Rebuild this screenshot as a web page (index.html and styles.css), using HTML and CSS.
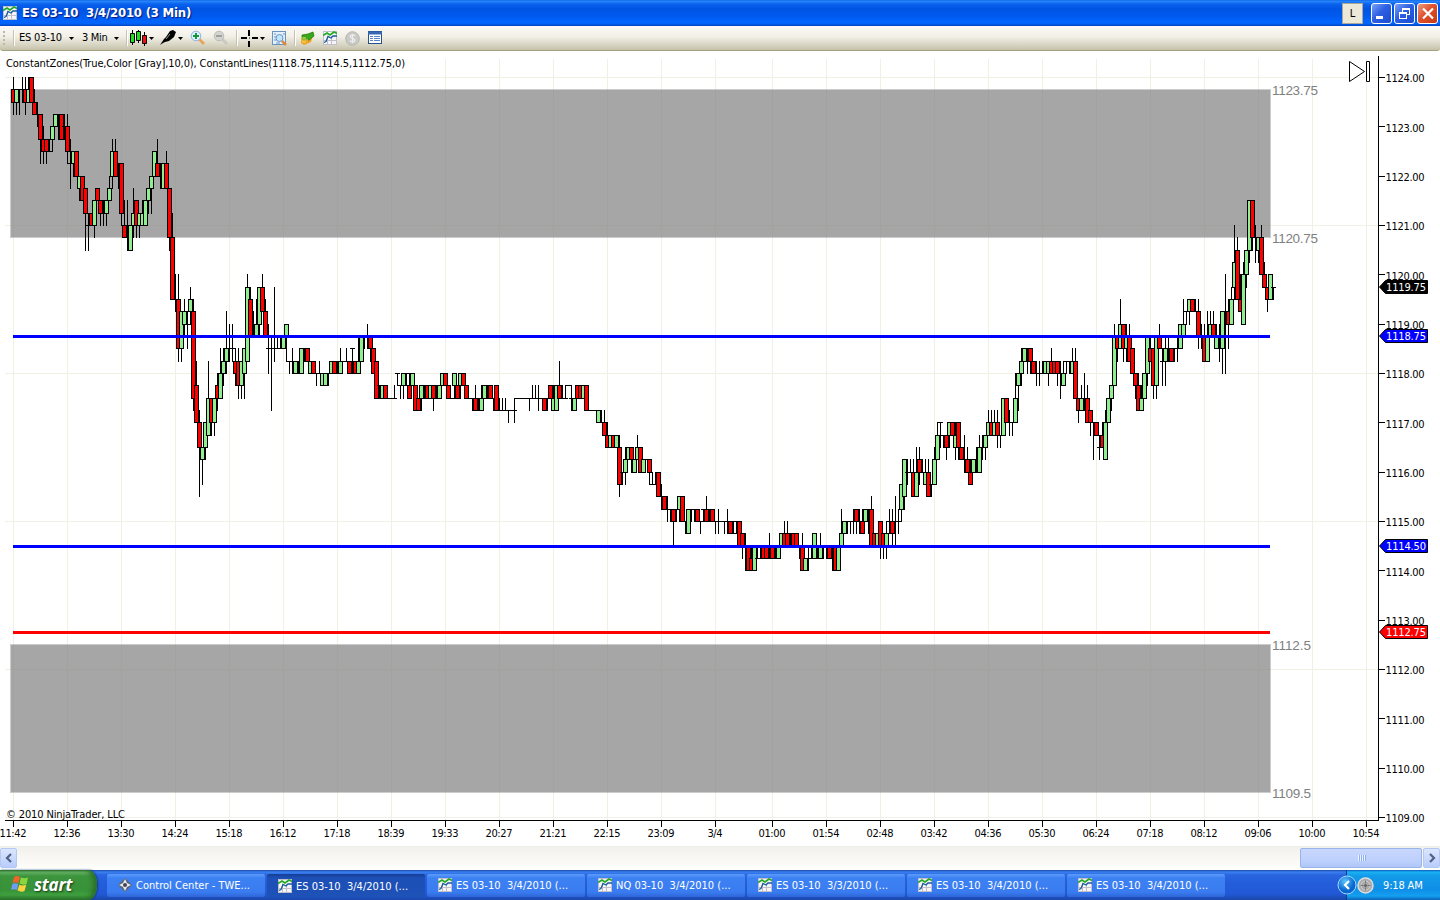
FILE: index.html
```html
<!DOCTYPE html>
<html lang="en">
<head>
    <meta charset="UTF-8">
    <title>ES 03-10  3/4/2010 (3 Min)</title>
    <link rel="stylesheet" href="styles.css">
</head>
<body>

    <!-- shared icons -->
    <svg class="defs" width="0" height="0">
        <symbol id="i-chart" viewBox="0 0 14 14">
            <rect width="14" height="14" fill="#f6f6fa"/>
            <path d="M.5 0v14M4.500 5v9M8.500 5v9M13.500 0v14M0 .5h14M0 9.500h14M0 13.500h14" stroke="#c0c0cc" fill="none"/>
            <path d="M0 4.500l4-2.500 3 2 4-3 3 1.500" stroke="#22a822" stroke-width="1.600" fill="none"/>
            <path d="M1 11.500l2-1 2-5 3 1.500 2-2 4 0" stroke="#1c5a9c" stroke-width="1.300" fill="none"/>
        </symbol>
        <symbol id="i-drop" viewBox="0 0 5 3"><path d="M0 0h5L2.500 3z" fill="#000"/></symbol>
    </svg>

    <div class="titlebar">
        <svg class="app-icon"><use href="#i-chart"/></svg>
        <span class="title">ES 03-10&nbsp; 3/4/2010 (3 Min)</span>
        <span class="link-btn">L</span>
        <div class="win-btns">
            <span class="win-btn"><svg width="19" height="19"><path d="M4 13.500h7" stroke="#fff" stroke-width="3"/></svg></span>
            <span class="win-btn"><svg width="19" height="19"><path d="M7.500 4v4M7 4.500h8M7 5.500h8M14.500 4v6M12 10.500h3M4.500 8v7M4 8.500h8M4 9.500h8M11.500 8v7M4 14.500h8" stroke="#fff" fill="none"/></svg></span>
            <span class="win-btn close"><svg width="19" height="19"><path d="M5 4.500l10 10M15 4.500l-10 10" stroke="#fff" stroke-width="2.200"/></svg></span>
        </div>
    </div>

    <div class="toolbar">
        <span class="grip"></span>
        <span class="sep"></span>
        <span class="tool-text instrument">ES 03-10</span>
        <svg class="drop"><use href="#i-drop"/></svg>
        <span class="tool-text period">3 Min</span>
        <svg class="drop"><use href="#i-drop"/></svg>
        <span class="sep second"></span>
        <svg class="tool candles" width="17" height="16"><path d="M2.500 0v15M8.500 0v13M14.500 2v14" stroke="#000"/><path d="M.5 3.500h4v9h-4zM6.500 1.500h4v9h-4z" fill="#1fe01f" stroke="#000"/><path d="M12.500 5.500h4v8h-4z" fill="#f01010" stroke="#000"/></svg>
        <svg class="drop near"><use href="#i-drop"/></svg>
        <svg class="tool pen" width="16" height="16"><path d="M0 15l4-6 2-2 4-6 3-1 3 2-2 5-5 4-4 1-2 1z" fill="#000"/><path d="M6 9l4-5" stroke="#999"/></svg>
        <svg class="drop near"><use href="#i-drop"/></svg>
        <svg class="tool zoom-in" width="16" height="16"><path d="M9 9l5 5" stroke="#e8a45a" stroke-width="3"/><circle cx="6" cy="6" r="4.800" fill="#dff0ff" stroke="#8fb4dc"/><path d="M6 3v6M3 6h6" stroke="#16963a" stroke-width="2"/></svg>
        <svg class="tool zoom-out" width="16" height="16"><path d="M9 9l5 5" stroke="#c8c8c4" stroke-width="3"/><circle cx="6" cy="6" r="4.800" fill="#d4d4d0" stroke="#bcbcb8"/><path d="M3 6h6" stroke="#a0a09c" stroke-width="2"/></svg>
        <span class="sep third"></span>
        <svg class="tool cross" width="17" height="17"><path d="M0 8h6M11 8h6M8 0v6M8 11v6" stroke="#000" stroke-width="2"/><path d="M8 8h1" stroke="#000"/></svg>
        <svg class="drop near"><use href="#i-drop"/></svg>
        <svg class="tool page" width="15" height="15"><rect x=".5" y=".5" width="13" height="13" fill="#e4f0fc" stroke="#6a93c4"/><path d="M2 3h2M2 6h2M2 9h2M11 3h2M4 12h4" stroke="#6a93c4"/><path d="M10 10l4 4" stroke="#e08a40" stroke-width="2.500"/><circle cx="7.500" cy="7" r="3.500" fill="#c4e4fa" stroke="#6a93c4"/></svg>
        <span class="sep fourth"></span>
        <svg class="tool order" width="15" height="15"><path d="M1 7l3-3h9l-2 7-7 3-3-2z" fill="#f0a020"/><path d="M2 4l6-1 5-2 1 4-5 4-7 0z" fill="#38a818" stroke="#187008" stroke-width=".7"/><path d="M1 7h5M1 9h7M2 11h4" stroke="#ffe060"/></svg>
        <svg class="tool mini-chart"><use href="#i-chart"/></svg>
        <svg class="tool dollar" width="15" height="15"><circle cx="7.500" cy="7.500" r="6.800" fill="#c9c9c5" stroke="#b6b6b2"/><path d="M10 5c-1-1.500-5-1.500-5 .6s5 1.300 5 3.500-4 2-5 .6M7.500 3v9" stroke="#eee" stroke-width="1.200" fill="none"/></svg>
        <svg class="tool table" width="15" height="14"><rect x=".5" y=".5" width="13" height="12" fill="#fff" stroke="#27508c"/><path d="M0 2h14" stroke="#3668b4" stroke-width="3"/><path d="M2 5.500h3M2 7.500h3M2 9.500h3M6 5.500h6M6 7.500h6M6 9.500h6" stroke="#5a86c8"/></svg>
    </div>

    <svg id="chart" class="chart" width="1440" height="795" viewBox="0 51 1440 795"></svg>

    <div class="scrollbar">
        <span class="scroll-btn"><svg width="8" height="10"><path d="M6 1L2 5l4 4" stroke="#4d6185" stroke-width="2.200" fill="none"/></svg></span>
        <span class="scroll-thumb"><i></i><i></i><i></i><i></i></span>
        <span class="scroll-btn"><svg width="8" height="10"><path d="M2 1l4 4-4 4" stroke="#4d6185" stroke-width="2.200" fill="none"/></svg></span>
    </div>

    <div class="taskbar">
        <div class="start">
            <svg width="18" height="18" viewBox="0 0 18 18">
                <path d="M3 2q3-2 6 0L7.500 8q-3-1.500-6 0z" fill="#f2632c"/>
                <path d="M10 2.500q3 1.500 7 0L15.500 9q-3 1.500-7-.5z" fill="#8bd63c"/>
                <path d="M1.300 9q3-1.500 6 0L6 15q-3-1.500-6 0z" fill="#6f9cf4"/>
                <path d="M8.300 9.800q3 1.500 7 0L13.500 16q-3 1.500-7-.5z" fill="#fbd33c"/>
            </svg>
            <span>start</span>
        </div>
        <div class="tasks">
            <div class="task"><svg viewBox="0 0 14 14"><path d="M7 0l7 7-7 7-7-7z" fill="#596577"/><path d="M7 1l2 4 4 2-4 2-2 4-2-4-4-2 4-2z" fill="#e4e8ee"/><circle cx="7" cy="7" r="2" fill="#445"/></svg><span>Control Center - TWE...</span></div>
            <div class="task active"><svg><use href="#i-chart"/></svg><span>ES 03-10&nbsp; 3/4/2010 (...</span></div>
            <div class="task"><svg><use href="#i-chart"/></svg><span>ES 03-10&nbsp; 3/4/2010 (...</span></div>
            <div class="task"><svg><use href="#i-chart"/></svg><span>NQ 03-10&nbsp; 3/4/2010 (...</span></div>
            <div class="task"><svg><use href="#i-chart"/></svg><span>ES 03-10&nbsp; 3/3/2010 (...</span></div>
            <div class="task"><svg><use href="#i-chart"/></svg><span>ES 03-10&nbsp; 3/4/2010 (...</span></div>
            <div class="task"><svg><use href="#i-chart"/></svg><span>ES 03-10&nbsp; 3/4/2010 (...</span></div>
        </div>
        <div class="tray">
            <svg class="expand" width="20" height="20"><defs><radialGradient id="ball" cx=".4" cy=".3"><stop offset="0" stop-color="#5cc8ff"/><stop offset="1" stop-color="#0a66d0"/></radialGradient></defs><circle cx="10" cy="10" r="9" fill="url(#ball)" stroke="#9fdcff"/><path d="M12 6l-4 4 4 4" stroke="#fff" stroke-width="2.200" fill="none"/></svg>
            <svg class="disc" width="17" height="17"><circle cx="8.500" cy="8.500" r="7.500" fill="#a9a9a9" stroke="#dcdcdc" stroke-width="1.500"/><circle cx="8.500" cy="8.500" r="4.500" fill="none" stroke="#d2d2d2"/><path d="M8.500 3.500v3M8.500 10.500v3M3.500 8.500h3M10.500 8.500h3" stroke="#777"/><circle cx="8.500" cy="8.500" r="1.500" fill="#666"/></svg>
            <span>9:18 AM</span>
        </div>
    </div>

    <script src="chart.js"></script>
</body>
</html>
```

FILE: styles.css
```css
body {
    margin: 0;
    width: 1440px;
    height: 900px;
    overflow: hidden;
    display: flex;
    flex-direction: column;
    background: #fff;
    font-family: "DejaVu Sans Condensed", "DejaVu Sans", sans-serif;
    font-stretch: condensed;
    font-size: 11px;
    color: #000;
}
.defs {
    position: absolute;
}
svg {
    display: block;
    flex: none;
}

/* title bar */
.titlebar {
    box-sizing: border-box;
    height: 26px;
    flex: none;
    display: flex;
    align-items: center;
    padding: 0 2px 0 3px;
    background: linear-gradient(#0a5ae0 0, #2a8afc 1px, #0a62ee 4px, #0054e3 9px, #005bf0 17px, #0066ff 22px, #0060f4 24px, #0040b8 26px);
}
.app-icon {
    width: 14px;
    height: 14px;
}
.title {
    margin-left: 5px;
    color: #fff;
    font-size: 13px;
    font-weight: bold;
    letter-spacing: -0.2px;
    line-height: 26px;
    text-shadow: 1px 1px 1px #0a1883;
    white-space: pre;
}
.link-btn {
    box-sizing: border-box;
    width: 21px;
    height: 21px;
    margin-left: auto;
    background: #ece9d8;
    border: 1px solid #aca899;
    line-height: 20px;
    text-align: center;
}
.win-btns {
    display: flex;
    gap: 2px;
    margin-left: 8px;
}
.win-btn {
    width: 19px;
    height: 19px;
    border: 1px solid #fff;
    border-radius: 3px;
    background: linear-gradient(135deg, #7aa2f6, #2c5fe2 45%, #1b4cd0);
}
.win-btn.close {
    background: linear-gradient(135deg, #ee9a80, #e0512c 45%, #c23a12);
}

/* toolbar */
.toolbar {
    box-sizing: border-box;
    height: 25px;
    flex: none;
    display: flex;
    align-items: center;
    padding-left: 3px;
    background: linear-gradient(#fbfaf7, #f1efe6 45%, #d2cfbc 85%, #c3c1a8);
    border-bottom: 1px solid #a0a280;
    border-radius: 0 0 3px 3px;
}
.grip {
    width: 2px;
    height: 15px;
    background: repeating-linear-gradient(#bdb9a8 0 2px, transparent 2px 4px);
}
.sep {
    width: 1px;
    height: 16px;
    margin-left: 8px;
    background: #c5c2b2;
    border-right: 1px solid #fff;
}
.sep.second { margin-left: 7px; }
.sep.third { margin-left: 7px; }
.sep.fourth { margin-left: 7px; }
.tool-text {
    white-space: nowrap;
    line-height: 24px;
}
.instrument {
    width: 46px;
    margin-left: 4px;
    letter-spacing: -0.2px;
}
.period {
    width: 28px;
    margin-left: 8px;
    letter-spacing: -0.3px;
}
.drop {
    width: 5px;
    height: 3px;
    margin-left: 4px;
}
.drop.near {
    margin-left: 2px;
}
.candles { margin-left: 2px; }
.pen { margin-left: 6px; }
.zoom-in { margin-left: 7px; }
.zoom-out { margin-left: 7px; }
.cross { margin-left: 3px; }
.page { margin-left: 7px; }
.order { margin-left: 4px; }
.mini-chart {
    width: 14px;
    height: 14px;
    margin-left: 8px;
}
.dollar { margin-left: 8px; }
.table { margin-left: 8px; }

/* chart */
.chart text {
    font-size: 11px;
}
.chart .zone-label {
    font-family: "Liberation Sans", Arial, sans-serif;
    font-size: 13.5px;
    fill: #808080;
}
.chart .tag {
    fill: #fff;
}

/* scrollbar */
.scrollbar {
    box-sizing: border-box;
    height: 24px;
    flex: none;
    display: flex;
    align-items: center;
    gap: 1px;
    padding: 1px 0 3px;
    border-top: 1px solid #eeede5;
    background: linear-gradient(#f3f1ec, #fefefb);
}
.scroll-btn {
    box-sizing: border-box;
    width: 17px;
    height: 20px;
    display: flex;
    align-items: center;
    justify-content: center;
    border: 1px solid #b4c8f6;
    border-radius: 2px;
    background: linear-gradient(#dbe5fe, #b9cdfb);
}
.scroll-thumb {
    box-sizing: border-box;
    width: 122px;
    height: 20px;
    margin-left: auto;
    display: flex;
    align-items: center;
    justify-content: center;
    gap: 1px;
    border: 1px solid #98b4ea;
    border-radius: 2px;
    background: linear-gradient(#c9d7fd, #bccffc 70%, #b0c6f8);
}
.scroll-thumb i {
    width: 1px;
    height: 6px;
    background: #eef4fe;
    border-right: 1px solid #8cb0f8;
    margin-right: -1px;
}

/* taskbar */
.taskbar {
    height: 30px;
    flex: none;
    display: flex;
    background: linear-gradient(#1c48a8 0, #3a80f0 2px, #2a65df 5px, #245edb 12px, #2258d6 24px, #1b47a8 30px);
}
.start {
    box-sizing: border-box;
    width: 97px;
    height: 30px;
    display: flex;
    align-items: center;
    padding: 0 0 2px 11px;
    gap: 5px;
    border-radius: 0 9px 9px 0 / 0 14px 14px 0;
    background: linear-gradient(#2c6c2c 0, #6cb86c 2px, #3c953c 6px, #389238 20px, #3fa03f 25px, #2a702a 30px);
    box-shadow: inset -4px 0 5px #2a702a, 1px 0 2px #14388c;
    color: #fff;
    font-family: "Open Sans", sans-serif;
    font-stretch: normal;
    font-size: 17px;
    font-weight: bold;
    font-style: italic;
    letter-spacing: -0.2px;
    text-shadow: 1px 1px 2px #143c14;
}
.tasks {
    display: flex;
    gap: 2px;
    padding: 4px 0 0 10px;
}
.task {
    box-sizing: border-box;
    width: 158px;
    height: 23px;
    display: flex;
    align-items: center;
    gap: 4px;
    padding: 0 0 1px 11px;
    border-radius: 2px;
    background: linear-gradient(#5c9cfa 0, #3c81f3 4px, #3a7cf0 18px, #2d66d8);
    color: #fff;
    white-space: pre;
    letter-spacing: 0.02px;
}
.task svg {
    width: 14px;
    height: 14px;
}
.task.active {
    background: linear-gradient(#163f94, #1d4fb6 4px, #1e52b7);
    padding-top: 1px;
    padding-bottom: 0;
}
.tray {
    width: 93px;
    margin-left: auto;
    display: flex;
    align-items: center;
    background: linear-gradient(#0c59b9 0, #1bb0f4 2px, #129ae8 6px, #0f8fe8 20px, #14a0f0 26px, #0b63b8 30px);
    border-left: 1px solid #0a3c86;
    color: #fff;
}
.tray .expand {
    margin-left: -10px;
}
.tray .disc {
    margin-left: 0;
}
.tray span {
    margin-left: 9px;
    letter-spacing: -0.15px;
    white-space: nowrap;
}
```

FILE: chart.js
```js
// bars are stored in ticks (0.25) below 1124.00
// r/g = down/up bar: top.bottom[.high.low], d = doji: level[.high.low]
const bars = `
r1.2.0.3 g1.2.1.3 d1.1.3 d1.0.2 r1.2.0.3 g1.2.0.2 r0.2 r2.3.1.3 d3.2.4 r3.5.3.7
r5.6.4.7 r5.6.5.7 d6.5.6 g4.5.4.6 g3.4 d3.3.5 r3.5 d4.3.5 r4.6.3.7 d7.5.9
g6.7.6.8 r6.8 g8.9.8.10 r8.10 r9.11.9.14 d12.11.14 r11.12 g10.12.10.13 r9.10 r10.11.10.12
d11.10.12 g10.11.10.12 g9.10.8.10 g6.8.5.9 r6.8.5.8 d8.7.9 r7.11.7.12 r12.13.10.13 d12.10.14 g12.14
g11.12.9.13 r10.12.10.13 g11.12.11.13 g11.12.10.12 g10.12 g9.10.9.11 g8.9.8.11 g6.8 r7.8.5.8 d7.7.9
g7.9 r7.9.6.9 r9.13.9.14 r13.18.11.18 d18.16.19 r18.22.16.23 g19.22.19.23 g19.20.18.21 d20.19.22 g18.19.17.20
r19.26.18.27 r25.28.23.28 r28.30.27.34 g30.31.30.33 g28.30.28.31 g26.29.23.29 r26.28.26.29 g26.28.26.29 r25.26.24.27 g24.26.22.26
g23.24.22.25 g22.23.19.24 d22.20.23 d22.20.23 r23.24.22.25 r23.25.22.26 g23.25.23.26 g22.24.22.26 g17.23.16.23 r18.21.17.21
d21.19.21 g20.21.18.21 g17.20.17.21 r17.19.16.19 r19.21.18.21 d22.20.24 d22.21.27 d22.17.23 d22.21.22 d22.21.22
g21.22 g20.21.20.23 d23.23.24 d23.22.24 g23.24 d24.23.24 g22.24 d22.22.23 r22.23 g23.24
r23.24 d24.24.25 d24.23.24 g24.25 g24.25 d24.24.25 g23.24 r23.24 d24.23.24 g23.24.22.24
d23 d23.22.23 r23.24 d22.22.24 r23.24 g23.24.21.24 g21.23 d21.21.22 d21.20.22 r21.22.21.23
r22.24 r23.26 d25.25.26 g25.26 r25.26 d26 d26 d26.25.26 d24.24.25 d25.25.26
g24.25.24.26 d24.24.25 r25.26.24.26 g24.25 r25.27 r26.27 g25.26.25.27 d26.25.26 r25.26 g25.26
r25.26.25.27 d26.25.26 g25.26 g24.25 r24.25 r25.26 d26 g24.25.24.26 r25.26 g24.25.24.26
r24.25 r25.26 d26 d26.26.27 r26.27.25.27 d26.26.27 g26.27.25.27 g25.26 d25.25.26 r25.26
d26.26.27 r25.27 d27.26.27 d27.26.27 d27.26.27 d27.27.28 d27 d27.26.28 d26 d26
d26 d26 d26.26.27 d26.25.26 d26.25.26 d26.25.27 d26 r26.27 d26.26.27 r25.26
g26.27.25.27 g25.27 r25.26.23.26 d26.25.26 d26.25.26 d25 d26.25.27 g26.27 r25.26 r25.26
g25.26 r25.27 d27 d27 d27 g27.28 d28.27.28 r28.29.27.29 r29.30.28.30 g29.30
r29.30 g29.30 r30.33.29.34 d32.32.33 g31.32.30.33 g30.31 r30.31.30.32 g31.32 g30.31.29.31 r30.32
g31.32 d31 r31.32.31.33 d33.32.33 d33.32.33 r32.34 d34.33.35 r34.35 d35.34.36 d35.35.36
r35.36.35.38 d35.35.36 g34.35.34.36 r34.36 d36.36.37 g35.37 d35.35.36 d35.35.36 r35.36 d36.36.37
d35.35.36 r35.36.34.36 d35.35.36 r35.36 d36.36.37 d36.35.37 d36 d36.36.37 d36.35.37 r36.37
d36.36.37 d37.36.37 r36.38 r37.38.37.39 d38.37.40 r38.40 r39.40.38.40 g38.40 d39.38.39 d39.38.39
r38.39 r38.39 d39.37.39 r38.39 d39.38.39 g38.39 g37.38 r37.38.36.38 r37.38.36.38 d37.37.38
r37.38 r37.38 d38.38.39 r38.40.37.40 g39.40 d39.38.40 d39.38.39 g37.39 d38.38.39 g38.39.37.39
d38.38.39 d38.38.39 r38.39 d39.38.40 r38.40 g38.40 g37.38.35.38 g36.37 d36.36.37 d36.36.37
d36.35.37 r35.36.35.37 d36.35.37 r36.37.35.37 g35.36 d35.35.37 r35.38.34.38 r37.38 g37.38 r36.38.36.39
r37.38.37.39 g37.38.36.39 d36.35.37 r36.37.35.38 d36.34.38 d36.35.37 g33.35.33.36 g31.34.31.35 d32.31.33 d32.31.32
r32.34.31.34 g32.34.30.34 r31.32.30.33 d32.31.32 g32.33.31.33 r32.34.31.34 d33.33.34 g31.33.30.33 g29.31.28.31 d28.28.30
d29.29.30 r29.30.29.31 g28.29.28.30 r28.29 g29.30.28.31 r28.30.28.31 r30.31 d31.29.32 r31.32.30.32 r32.33.31.33
g31.32 d32.30.32 g30.32.29.32 d30.29.31 g29.30.29.31 g28.29.27.29 r28.29.27.29 g28.29.27.29 r28.29.27.30 d29.29.30
g26.29 r26.28 d28.27.29 d28.28.29 g26.28.24.28 g24.25.24.27 g23.24.22.25 g22.23 d22.22.24 r22.23.22.24
r23.24 d24.23.25 d24.23.25 d24.23.24 g23.24 g23.24.23.25 r23.24.22.24 r23.24 r23.24.23.25 d24.23.26
g24.25.23.25 d23.23.24 d23.23.24 g23.24.22.24 r23.26.22.26 r26.27.26.28 g26.27.25.27 d26.24.27 r26.28.25.28 r27.28.27.29
d28.28.31 r28.29 d30.29.31 r29.30.28.30 g28.31.27.31 g26.28 g25.26.25.27 g21.25.20.25 r21.22.21.23 g20.22.18.22
r20.22.20.23 g21.22.20.23 r21.23.20.23 r22.24 r24.25.24.26 r25.27.24.27 g26.27.25.27 g24.26 g21.24.21.25 r22.23.21.23
r22.25.22.26 g21.25.21.26 r21.22.20.22 d23.22.25 g22.23.21.25 d22.21.23 r22.23 d22.22.23 d22.21.23 g20.22
g20.21.18.21 d19.19.20 g18.19.18.20 r18.19 d19.18.19 r19.21.18.22 d21.20.22 r21.23.20.23 g21.23.19.23 g20.21.19.21
r20.21.19.21 g21.22.20.22 d21.20.23 g19.22.19.24 d19.16.24 r19.20.18.22 g18.20.17.20 g15.17.12.18 r14.18.13.18 r18.19.16.19
g16.20.15.20 g14.16.14.17 g10.14.10.15 r10.13.10.14 d13.12.15 g13.14.13.15 r13.16.12.16 r16.17.15.17 r17.18.17.19 g16.18
d17.17.18`.trim().split(/\s+/);

const times = ["11:42", "12:36", "13:30", "14:24", "15:18", "16:12", "17:18", "18:39", "19:33", "20:27", "21:21", "22:15", "23:09", "3/4",
    "01:00", "01:54", "02:48", "03:42", "04:36", "05:30", "06:24", "07:18", "08:12", "09:06", "10:00", "10:54"];

const tickY = n => Math.round(77 + n * 37 / 3);
const priceY = p => tickY((1124 - p) * 4);
const timeX = i => 13 + i * 54 + (i > 13 ? 3 : 0);

const rect = (x, y, w, h, fill, extra = "") => `<rect x="${x}" y="${y}" width="${w}" height="${h}" fill="${fill}" ${extra}/>`;
const text = (x, y, str, width, extra = "") => `<text x="${x}" y="${y}" textLength="${width}" ${extra}>${str}</text>`;

let out = "";

// grid
times.forEach((t, i) => out += rect(timeX(i), 59, 1, 761, "#f0f0e4"));
for (let p = 1124; p >= 1109; p -= 3) out += rect(5, priceY(p), 1373, 1, "#f0f0e4");

// zones
[[1123.75, 1120.75], [1112.5, 1109.5]].forEach(([hi, lo]) => {
    const y = priceY(hi), h = priceY(lo) - y;
    out += rect(11, y + 1, 1259, h - 1, "#808080", 'fill-opacity="0.7"');
    out += rect(10.5, y + .5, 1260, h, "none", 'stroke="#808080" stroke-opacity="0.4"');
    out += text(1272, y + 6, hi, hi === 1112.5 ? 39 : 46, 'class="zone-label"');
    out += text(1272, y + h + 6, lo, lo === 1109.5 ? 39 : 46, 'class="zone-label"');
});

// bars
bars.forEach((bar, i) => {
    const x = 13 + i * 3;
    const v = bar.slice(1).split(".").map(Number);
    if (bar[0] === "d") {
        const [mid, hi = mid, lo = mid] = v;
        out += rect(x, tickY(hi), 1, tickY(lo) - tickY(hi) + 1, "#000");
        out += rect(x - 2, tickY(mid), 5, 1, "#000");
    } else {
        const [top, bottom, hi = top, lo = bottom] = v;
        const y = tickY(top), h = tickY(bottom) - y;
        out += rect(x, tickY(hi), 1, tickY(lo) - tickY(hi) + 1, "#000");
        out += rect(x - 2, y, 5, h + 1, "#000");
        out += rect(x - 1, y + 1, 3, h - 1, bar[0] === "r" ? "#ff0000" : "#90ee90");
    }
});

// constant lines
const lines = [[1118.75, "#0000ff"], [1114.5, "#0000ff"], [1112.75, "#ff0000"]];
lines.forEach(([p, color]) => out += rect(13, priceY(p) - 1, 1257, 3, color));

// axes
out += rect(1378, 56, 1, 765, "#000") + rect(5, 820, 1374, 1, "#000");
for (let p = 1124; p >= 1109; p--) {
    const labelY = Math.ceil(77 + (1124 - p) * 148 / 3) + 5;
    out += rect(1379, priceY(p), 6, 1, "#000") + text(1385.5, labelY, p.toFixed(2), 39);
}
times.forEach((t, i) => {
    const x = timeX(i), w = t.length > 3 ? 27 : 15;
    out += rect(x, 821, 1, 6, "#000") + text(x - w / 2, 837, t, w);
});

// price tags
[[1119.75, "#000"], ...lines].forEach(([p, color]) => {
    const y = Math.floor(77 + (1124 - p) * 148 / 3 + .4);
    out += `<path d="M1379.500 ${y}l6-6.500h42v13h-42z" fill="${color}" stroke="#000"/>`;
    out += text(1386, y + 4, p.toFixed(2), 40, 'class="tag"');
});

out += text(6, 67, "ConstantZones(True,Color [Gray],10,0), ConstantLines(1118.75,1114.5,1112.75,0)", 399);
out += text(6, 818, "© 2010 NinjaTrader, LLC", 119);
out += '<path d="M1349.500 61.500v20l15-10zM1366.500 61.500h3v20h-3z" fill="#fff" stroke="#000"/>';

document.getElementById("chart").innerHTML = out;
```
